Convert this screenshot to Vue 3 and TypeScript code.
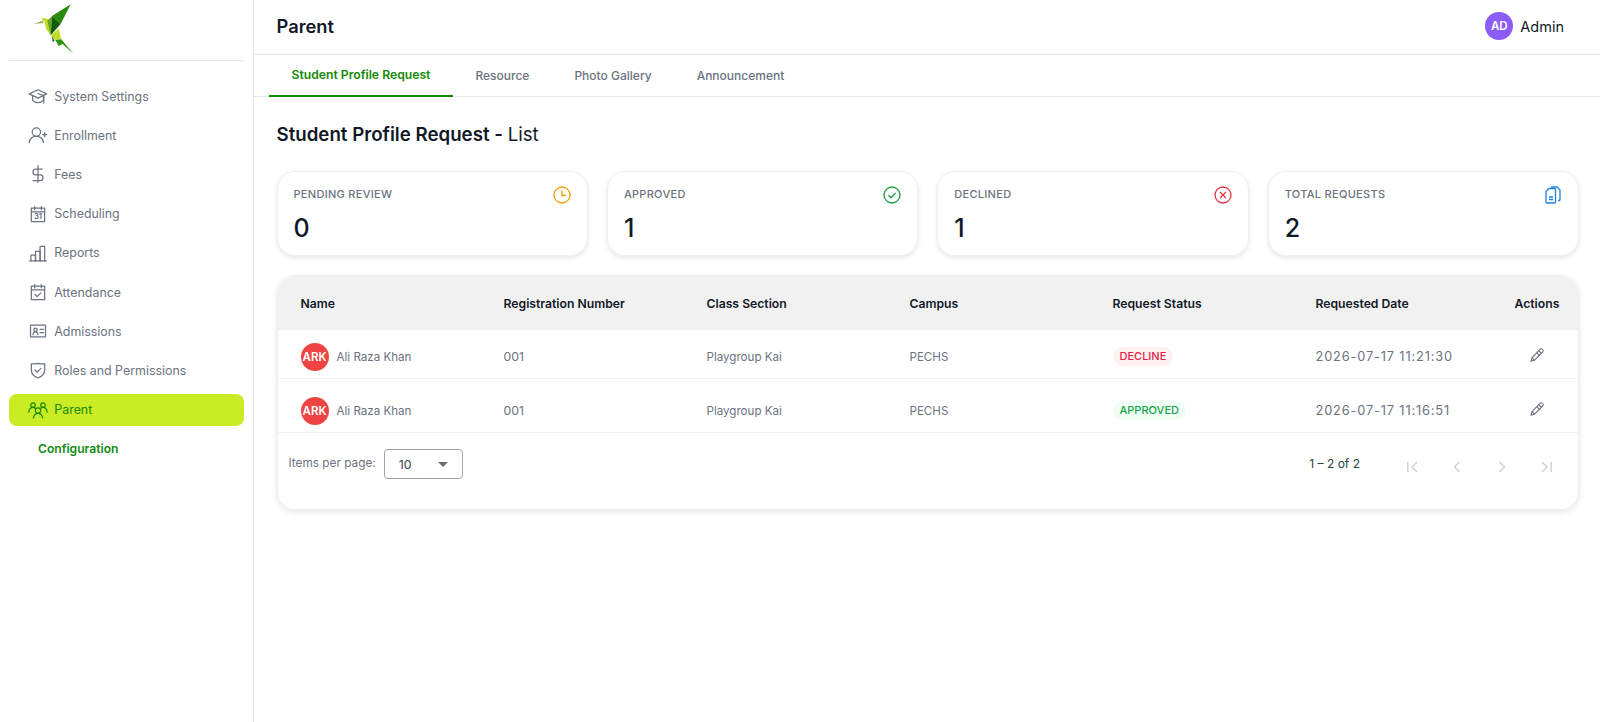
<script setup lang="ts">
interface NavItem {
  label: string;
  paths: string[];
  calText?: string;
  active?: boolean;
}

const calendarFrame = "M4 5h16v16H4z M4 9.500h16 M8 3v4 M16 3v4";

const navItems: NavItem[] = [
  {
    label: "System Settings",
    paths: [
      "M12 4.500 1.500 9.500 12 14.500l10.500-5L12 4.500Z",
      "M5.500 12v5c1.500 2 4 3 6.500 3s5-1 6.500-3v-5",
      "M19 11.500 12 9 M19 11.500v9",
    ],
  },
  {
    label: "Enrollment",
    paths: [
      "M10 3.500a5 5 0 1 0 0 10 5 5 0 0 0 0-10Z",
      "M1.500 21c.6-4.500 4-7.500 8.500-7.500s7.900 3 8.500 7.500",
      "M20 9v5 M17.500 11.500h5",
    ],
  },
  {
    label: "Fees",
    paths: ["M12 2v20", "M17 6H9.500a3.500 3.500 0 0 0 0 7h5a3.500 3.500 0 0 1 0 7H6"],
  },
  { label: "Scheduling", paths: [calendarFrame], calText: "31" },
  {
    label: "Reports",
    paths: ["M2 21.500h20", "M3.500 21.500v-7h5.500v7", "M9 21.500V10h5.500v11.500", "M14.500 21.500V4H20v17.500"],
  },
  { label: "Attendance", paths: [calendarFrame, "M8.500 15l2.500 2.500 4.500-4.500"] },
  {
    label: "Admissions",
    paths: [
      "M3 5h18v14H3z",
      "M9 8.500a2 2 0 1 0 0 4 2 2 0 0 0 0-4Z",
      "M6 16.500c.3-2 1.500-3.500 3-3.500s2.700 1.500 3 3.500",
      "M14.500 10h4 M14.500 14h4",
    ],
  },
  {
    label: "Roles and Permissions",
    paths: [
      "M4 4.500c2.500.4 5.500.4 8-.5 2.500.9 5.500.9 8 .5V12c0 5-3.500 8-8 9.500C7.500 20 4 17 4 12V4.500Z",
      "M8.500 12l2.500 2.500 4.500-4.500",
    ],
  },
  {
    label: "Parent",
    active: true,
    paths: [
      "M12 9.500a3.200 3.200 0 1 0 0 6.400 3.200 3.200 0 0 0 0-6.400Z",
      "M6.500 21.500c.5-3 2.700-5.600 5.500-5.600s5 2.600 5.500 5.600",
      "M6 3.500a2.700 2.700 0 1 0 0 5.400 2.700 2.700 0 0 0 0-5.400Z",
      "M18 3.500a2.700 2.700 0 1 1 0 5.400 2.700 2.700 0 0 1 0-5.400Z",
      "M1 14.500c.4-3 2.400-5.600 5-5.600 1 0 1.900.3 2.600.9",
      "M23 14.500c-.4-3-2.400-5.600-5-5.600-1 0-1.900.3-2.600.9",
    ],
  },
];

const tabs = ["Student Profile Request", "Resource", "Photo Gallery", "Announcement"];

const stats = [
  { label: "Pending Review", value: 0, kind: "clock" },
  { label: "Approved", value: 1, kind: "check" },
  { label: "Declined", value: 1, kind: "cross" },
  { label: "Total Requests", value: 2, kind: "docs" },
];

const columns = [
  "Name",
  "Registration Number",
  "Class Section",
  "Campus",
  "Request Status",
  "Requested Date",
  "Actions",
];

const rows = [
  { initials: "ARK", name: "Ali Raza Khan", reg: "001", section: "Playgroup Kai", campus: "PECHS", status: "Decline", date: "2026-07-17 11:21:30" },
  { initials: "ARK", name: "Ali Raza Khan", reg: "001", section: "Playgroup Kai", campus: "PECHS", status: "Approved", date: "2026-07-17 11:16:51" },
];

const pagerIcons = ["M7 6v12 M18 6l-6 6 6 6", "M15 6l-6 6 6 6", "M9 6l6 6-6 6", "M6 6l6 6-6 6 M17 6v12"];
</script>

<template>
  <div class="shell">
    <aside class="sidebar">
      <div class="logo">
        <svg width="70" height="60" viewBox="0 0 210 180">
          <polygon points="42,72 68,62 70,69" fill="#8fae4a" />
          <polygon points="64,58 72,53 88,60 92,106 78,86 74,66" fill="#bcdc2c" />
          <polygon points="82,62 96,48 92,105" fill="#6aa51e" />
          <polygon points="152,13 96,48 122,72" fill="#2b8b0b" />
          <polygon points="96,48 122,72 92,106" fill="#0f5d06" />
          <polygon points="92,106 116,86 124,118 106,120" fill="#c3dc2b" />
          <polygon points="106,120 124,118 160,161 128,132 116,138" fill="#2f930f" />
          <polygon points="96,108 104,122 98,126" fill="#22600f" />
        </svg>
      </div>
      <nav class="nav">
        <a v-for="item in navItems" :key="item.label" class="nav-item" :class="{ active: item.active }">
          <svg class="nav-icon" viewBox="0 0 24 24" fill="none" stroke="currentColor" stroke-width="1.500" stroke-linejoin="round" stroke-linecap="round">
            <path v-for="d in item.paths" :key="d" :d="d" />
            <text v-if="item.calText" x="12" y="18.500" text-anchor="middle" class="cal-text">{{ item.calText }}</text>
          </svg>
          <span>{{ item.label }}</span>
        </a>
        <a class="sub-item">Configuration</a>
      </nav>
    </aside>

    <main class="main">
      <header class="topbar">
        <h1>Parent</h1>
        <div class="user">
          <span class="user-avatar">AD</span>
          <span>Admin</span>
        </div>
      </header>

      <div class="tabs">
        <a v-for="(tab, i) in tabs" :key="tab" class="tab" :class="{ current: i === 0 }">{{ tab }}</a>
      </div>

      <section class="content">
        <h2 class="page-title">Student Profile Request - <span>List</span></h2>

        <div class="stats">
          <div v-for="s in stats" :key="s.label" class="stat">
            <div class="stat-head">
              <span class="stat-label">{{ s.label }}</span>
              <svg v-if="s.kind === 'clock'" class="stat-icon" viewBox="0 0 18 18" fill="none" stroke="#f59e0b" stroke-width="1.300">
                <circle cx="9" cy="9" r="8" /><path d="M9 4.500V9.500h4" />
              </svg>
              <svg v-else-if="s.kind === 'check'" class="stat-icon" viewBox="0 0 18 18" fill="none" stroke="#1f9d3f" stroke-width="1.300">
                <circle cx="9" cy="9" r="8" /><path d="M5.500 9.200l2.500 2.500 4.500-4.700" />
              </svg>
              <svg v-else-if="s.kind === 'cross'" class="stat-icon" viewBox="0 0 18 18" fill="none" stroke="#e5343f" stroke-width="1.300">
                <circle cx="9" cy="9" r="8" /><path d="M6 6l6 6M12 6l-6 6" />
              </svg>
              <svg v-else class="stat-icon" viewBox="0 0 18 18" fill="none" stroke="#1e7fdc" stroke-width="1.300" stroke-linejoin="round">
                <path d="M2 5.500 5 2.500h5.500a1 1 0 0 1 1 1V16a1 1 0 0 1-1 1H3a1 1 0 0 1-1-1V5.500Z" />
                <path d="M7 1h6l3 3v9.500a1 1 0 0 1-1 1h-1" />
                <path d="M5 11h4M5 13.500h4" />
              </svg>
            </div>
            <div class="stat-value">{{ s.value }}</div>
          </div>
        </div>

        <div class="table-card">
          <div class="row head">
            <div v-for="c in columns" :key="c" class="cell">{{ c }}</div>
          </div>
          <div v-for="r in rows" :key="r.date" class="row body">
            <div class="cell name-cell">
              <span class="avatar">{{ r.initials }}</span>
              <span>{{ r.name }}</span>
            </div>
            <div class="cell reg-cell">{{ r.reg }}</div>
            <div class="cell">{{ r.section }}</div>
            <div class="cell">{{ r.campus }}</div>
            <div class="cell">
              <span class="badge" :class="r.status.toLowerCase()">{{ r.status }}</span>
            </div>
            <div class="cell date-cell">{{ r.date }}</div>
            <div class="cell action-cell">
              <svg class="edit" viewBox="0 0 24 24" fill="none" stroke="#6b7280" stroke-width="1.600" stroke-linejoin="round">
                <path d="M16.500 3.500a2.300 2.300 0 0 1 3.500 0l.5.5a2.300 2.300 0 0 1 0 3.500L8 20l-5 1.500L4.500 16 16.500 3.500Z" />
                <path d="M14.500 5.500l4.500 4.500 M11.500 8.500l4.500 4.500 M4.500 16 8 20" />
              </svg>
            </div>
          </div>
          <div class="pager">
            <span class="pager-label">Items per page:</span>
            <div class="select">
              <span>10</span>
              <i class="caret"></i>
            </div>
            <span class="range">1 – 2 of 2</span>
            <div class="pager-buttons">
              <svg v-for="d in pagerIcons" :key="d" class="pager-icon" viewBox="0 0 24 24" fill="none" stroke="#cfd1d4" stroke-width="1.800">
                <path :d="d" />
              </svg>
            </div>
          </div>
        </div>
      </section>
    </main>
  </div>
</template>

<style>
html,
body {
  margin: 0;
  background: #fff;
}
</style>

<style scoped>
* {
  box-sizing: border-box;
}

.shell {
  display: flex;
  min-height: 722px;
  font-family: Inter, "Noto Sans", sans-serif;
  color: #111827;
  background: #fff;
}

.sidebar {
  width: 254px;
  flex-shrink: 0;
  padding: 0 9px;
  border-right: 1px solid #e5e7eb;
}

.logo {
  height: 61px;
  padding-left: 11px;
  border-bottom: 1px solid #e5e7eb;
}

.logo svg {
  display: block;
}

.nav {
  display: flex;
  flex-direction: column;
  padding-top: 15.500px;
}

.nav-item {
  display: flex;
  align-items: center;
  gap: 6.300px;
  height: 39.200px;
  padding-left: 19px;
  font-size: 12.400px;
  color: #6b7280;
}

.nav-item.active {
  height: 32px;
  margin: 3.600px 0;
  border-radius: 8px;
  background: #c9ec25;
  color: #178a06;
}

.nav-icon {
  width: 20px;
  height: 20px;
  flex-shrink: 0;
}

.cal-text {
  font-size: 9px;
  font-weight: 700;
  fill: currentColor;
  stroke: none;
}

.sub-item {
  padding: 12px 0 0 29px;
  font-size: 12.100px;
  font-weight: 600;
  color: #108a10;
}

.main {
  flex: 1;
  min-width: 0;
}

.topbar {
  display: flex;
  align-items: center;
  justify-content: space-between;
  height: 55px;
  padding: 0 36px 2px 22.500px;
  border-bottom: 1px solid #e5e7eb;
}

.topbar h1 {
  margin: 0;
  font-size: 18.300px;
  font-weight: 600;
}

.user {
  display: flex;
  align-items: center;
  gap: 7px;
  font-size: 14.500px;
}

.user-avatar {
  display: flex;
  align-items: center;
  justify-content: center;
  width: 28px;
  height: 28px;
  border-radius: 50%;
  background: #8b5cf6;
  color: #fff;
  font-size: 11.500px;
  font-weight: 600;
}

.tabs {
  display: flex;
  height: 42px;
  padding-left: 15px;
  border-bottom: 1px solid #e5e7eb;
}

.tab {
  display: flex;
  align-items: center;
  padding: 0 22.500px 2px;
  margin-bottom: -1px;
  font-size: 12px;
  font-weight: 500;
  color: #6b7280;
}

.tab.current {
  border-bottom: 2px solid #138a06;
  color: #138a06;
  font-size: 12.200px;
  font-weight: 600;
}

.content {
  padding: 26px 21px 0 22.500px;
}

.page-title {
  margin: 0;
  font-size: 18.700px;
  line-height: 24px;
  font-weight: 600;
}

.page-title span {
  font-weight: 400;
}

.stats {
  display: grid;
  grid-template-columns: repeat(4, 1fr);
  gap: 19px;
  margin-top: 24px;
}

.stat {
  height: 85px;
  padding: 12px 16px;
  border: 1px solid #eceef1;
  border-radius: 18px;
  box-shadow: 0 2px 5px rgba(0, 0, 0, 0.1);
}

.stat-head {
  display: flex;
  align-items: flex-start;
  justify-content: space-between;
}

.stat-label {
  padding-top: 3px;
  font-size: 11px;
  font-weight: 500;
  letter-spacing: 0.3px;
  text-transform: uppercase;
  color: #6b7280;
}

.stat-icon {
  width: 18px;
  height: 18px;
  margin-top: 2px;
}

.stat-value {
  margin-top: 9px;
  font-size: 25px;
  line-height: 30px;
  font-weight: 500;
}

.table-card {
  margin-top: 19px;
  height: 235px;
  border: 1px solid #eceef1;
  border-radius: 18px;
  box-shadow: 0 2px 6px rgba(0, 0, 0, 0.1);
  overflow: hidden;
}

.row {
  display: grid;
  grid-template-columns: repeat(6, 203px) 1fr;
  align-items: center;
  border-bottom: 1px solid #f1f2f4;
}

.row.head {
  height: 54px;
  background: #f1f1f2;
  border-bottom: none;
  font-size: 12.200px;
  font-weight: 600;
  color: #111827;
}

.row.body {
  height: 54px;
  padding-top: 10px;
  font-size: 11.600px;
  color: #6b7280;
}

.row.head + .row.body {
  height: 49px;
  padding-top: 5px;
}

.cell {
  padding-left: 23px;
  white-space: nowrap;
}

.reg-cell {
  font-size: 12.300px;
}

.date-cell {
  font-size: 12.800px;
  letter-spacing: 0.850px;
}

.row.head .cell:last-child {
  padding-left: 19px;
}

.name-cell {
  display: flex;
  align-items: center;
  gap: 8px;
}

.avatar {
  display: flex;
  align-items: center;
  justify-content: center;
  width: 28px;
  height: 28px;
  border-radius: 50%;
  background: #ef4444;
  color: #fff;
  font-size: 11.500px;
  font-weight: 600;
}

.badge {
  display: inline-block;
  padding: 2px 7px;
  border-radius: 10px;
  font-size: 11px;
  line-height: 15px;
  font-weight: 500;
  text-transform: uppercase;
}

.badge.decline {
  background: #fff1f2;
  color: #e11d48;
}

.badge.approved {
  background: #f0fdf4;
  color: #16a34a;
}

.action-cell {
  display: flex;
  padding-left: 33px;
  padding-bottom: 4px;
}

.edit {
  width: 16px;
  height: 16px;
}

.pager {
  display: flex;
  align-items: flex-start;
  padding: 16px 0 0 11px;
}

.pager-label {
  margin-top: 7px;
  font-size: 11.800px;
  color: #6b7280;
}

.select {
  display: flex;
  align-items: center;
  justify-content: space-between;
  width: 79px;
  height: 30px;
  margin-left: 8px;
  padding: 0 14px;
  border: 1px solid #a3a3a3;
  border-radius: 4px;
  font-size: 12.300px;
  color: #374151;
}

.caret {
  border-left: 5px solid transparent;
  border-right: 5px solid transparent;
  border-top: 5px solid #6b6b6b;
}

.range {
  margin: 7px 0 0 auto;
  font-size: 12px;
  color: #25453f;
}

.pager-buttons {
  display: flex;
  gap: 25px;
  margin: 8px 21px 0 42px;
}

.pager-icon {
  width: 20px;
  height: 20px;
}
</style>
